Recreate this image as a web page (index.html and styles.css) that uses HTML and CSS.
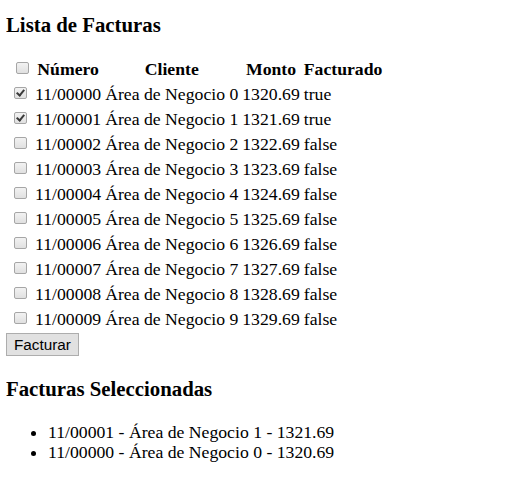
FILE: index.html
```html
<!DOCTYPE html>
<html>
<head>
<meta charset="utf-8">
<link rel="stylesheet" href="styles.css">
</head>
<body class="page">
<h3 class="title title-first">Lista de Facturas</h3>
<table class="grid">
<thead>
<tr><th class="c0"><input type="checkbox" class="chk"></th><th>Número</th><th>Cliente</th><th>Monto</th><th>Facturado</th></tr>
</thead>
<tbody>
<tr><td class="c0"><input type="checkbox" class="chk" checked></td><td>11/00000</td><td>Área de Negocio 0</td><td>1320.69</td><td>true</td></tr>
<tr><td class="c0"><input type="checkbox" class="chk" checked></td><td>11/00001</td><td>Área de Negocio 1</td><td>1321.69</td><td>true</td></tr>
<tr><td class="c0"><input type="checkbox" class="chk"></td><td>11/00002</td><td>Área de Negocio 2</td><td>1322.69</td><td>false</td></tr>
<tr><td class="c0"><input type="checkbox" class="chk"></td><td>11/00003</td><td>Área de Negocio 3</td><td>1323.69</td><td>false</td></tr>
<tr><td class="c0"><input type="checkbox" class="chk"></td><td>11/00004</td><td>Área de Negocio 4</td><td>1324.69</td><td>false</td></tr>
<tr><td class="c0"><input type="checkbox" class="chk"></td><td>11/00005</td><td>Área de Negocio 5</td><td>1325.69</td><td>false</td></tr>
<tr><td class="c0"><input type="checkbox" class="chk"></td><td>11/00006</td><td>Área de Negocio 6</td><td>1326.69</td><td>false</td></tr>
<tr><td class="c0"><input type="checkbox" class="chk"></td><td>11/00007</td><td>Área de Negocio 7</td><td>1327.69</td><td>false</td></tr>
<tr><td class="c0"><input type="checkbox" class="chk"></td><td>11/00008</td><td>Área de Negocio 8</td><td>1328.69</td><td>false</td></tr>
<tr><td class="c0"><input type="checkbox" class="chk"></td><td>11/00009</td><td>Área de Negocio 9</td><td>1329.69</td><td>false</td></tr>
</tbody>
</table>
<button class="btn">Facturar</button>
<h3 class="title title-second">Facturas Seleccionadas</h3>
<ul class="list">
<li>11/00001 - Área de Negocio 1 - 1321.69</li>
<li>11/00000 - Área de Negocio 0 - 1320.69</li>
</ul>
</body>
</html>
```
FILE: styles.css
```css
.page {
  margin: 0 0 0 6px;
  padding-top: 1px;
  font-family: "Liberation Serif", "Times New Roman", serif;
  font-size: 17.7px;
  color: #000;
  background: #fff;
}
.title {
  font-size: 20.8px;
  font-weight: bold;
  margin: 0;
  line-height: 23px;
}
.title-first {
  margin-top: 12px;
}
.title-second {
  margin-top: 21px;
}
.grid {
  border-collapse: separate;
  border-spacing: 2px 0;
  margin-top: 21px;
}
.grid th, .grid td {
  padding: 0 1px;
  height: 25px;
  line-height: 25px;
  white-space: nowrap;
}
.grid th {
  font-weight: bold;
  text-align: center;
}
.c0 {
  width: 22px;
  text-align: left;
}
.chk {
  -webkit-appearance: none;
  appearance: none;
  position: relative;
  box-sizing: border-box;
  margin: 0 0 1px 5px;
  width: 13px;
  height: 12px;
  vertical-align: baseline;
  border: 1px solid #a6a6a6;
  border-radius: 2px;
  background: linear-gradient(#f2f2f2, #e0e0e0);
}
.chk:checked::after {
  content: "";
  position: absolute;
  left: 3px;
  top: 0px;
  width: 3px;
  height: 6px;
  border-right: 2px solid #3a3a3a;
  border-bottom: 2px solid #3a3a3a;
  transform: rotate(40deg);
}
.btn {
  display: block;
  margin: 1px 0 0 0;
  height: 23px;
  padding: 0 7px;
  font-family: "Liberation Sans", Arial, sans-serif;
  font-size: 15.3px;
  color: #000;
  background: #e1e1e1;
  border: 1px solid #adadad;
  border-radius: 0;
}
.list {
  margin: 22px 0 0;
  padding-left: 42px;
  line-height: 20px;
}
```
